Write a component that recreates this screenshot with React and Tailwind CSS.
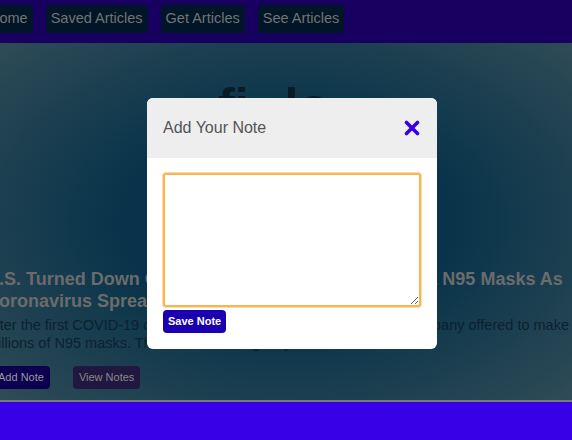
import React from "react";

const navItems = ["Home", "Saved Articles", "Get Articles", "See Articles"];

const App = () => {
  return (
    <div className="relative w-[572px] h-[440px] overflow-hidden bg-[#3700e6] font-['Liberation_Sans',Arial,sans-serif]">
      {/* Navbar */}
      <nav className="h-[43px] bg-[#170060] flex items-start pt-[5px] gap-[13px] ml-[-16px]">
        {navItems.map((item) => (
          <button
            key={item}
            className="h-[28px] px-[5px] rounded-[4px] bg-[#001628] text-[#737373] text-[14.5px] whitespace-nowrap"
          >
            {item}
          </button>
        ))}
      </nav>

      {/* Hero / article */}
      <div className="h-[357px] bg-[radial-gradient(ellipse_at_center,#08334a_40%,#2f4b56_100%)] flex flex-col">
        <h1 className="mt-[38px] ml-[218px] text-[50px] font-bold leading-none text-[#0a1b26] whitespace-nowrap">
          fi<span className="ml-[36px]">lo</span>
        </h1>

        <div className="mt-[137px] ml-[-14px] w-[592px]">
          <h2 className="text-[18px] font-bold leading-[22px] text-[#6b6b6b]">
            U.S. Turned Down Offer To Produce Millions Of Extra N95 Masks As Coronavirus Spread
          </h2>
          <p className="mt-[4px] text-[14.5px] leading-[18px] text-[#0c2130]">
            After the first COVID-19 case in the U.S., a Texas-based medical company offered to make millions of N95 masks. The U.S. federal agency declined.
          </p>
          <div className="mt-[14px] ml-[6px] flex gap-[23px]">
            <button className="h-[23px] px-[6px] rounded-[4px] bg-[#0c004f] text-[#9a9a9a] text-[11px]">
              Add Note
            </button>
            <button className="h-[23px] px-[6px] rounded-[4px] bg-[#201840] text-[#8a8a8a] text-[11px]">
              View Notes
            </button>
          </div>
        </div>
      </div>

      {/* Footer */}
      <footer className="h-[40px] border-t-2 border-[#7a7a7a] bg-[#3700e6]" />

      {/* Modal */}
      <div className="absolute left-[147px] top-[98px] w-[290px] rounded-[6px] overflow-hidden bg-white">
        <div className="h-[60px] bg-[#eeeeee] flex items-center justify-between pl-[16px] pr-[17px]">
          <span className="text-[16px] text-[#555555]">Add Your Note</span>
          <button className="w-[16px] h-[16px]">
            <svg viewBox="0 0 16 16" width="16" height="16">
              <path d="M2.5 2.5 L13.5 13.5 M13.5 2.5 L2.5 13.5" stroke="#3700e6" strokeWidth="3.6" strokeLinecap="round" />
            </svg>
          </button>
        </div>
        <div className="px-[16px] pt-[15px] pb-[16px]">
          <textarea
            autoFocus
            className="block w-[258px] h-[134px] rounded-[3px] border-2 border-[#f8b555] ring-1 ring-[#fcdca8] outline-none bg-white p-[1px] text-[13px]"
          />
          <button className="mt-[3px] h-[23px] px-[5px] rounded-[4px] bg-[#1a00b0] text-white text-[11px] font-bold">
            Save Note
          </button>
        </div>
      </div>
    </div>
  );
};

export default App;
